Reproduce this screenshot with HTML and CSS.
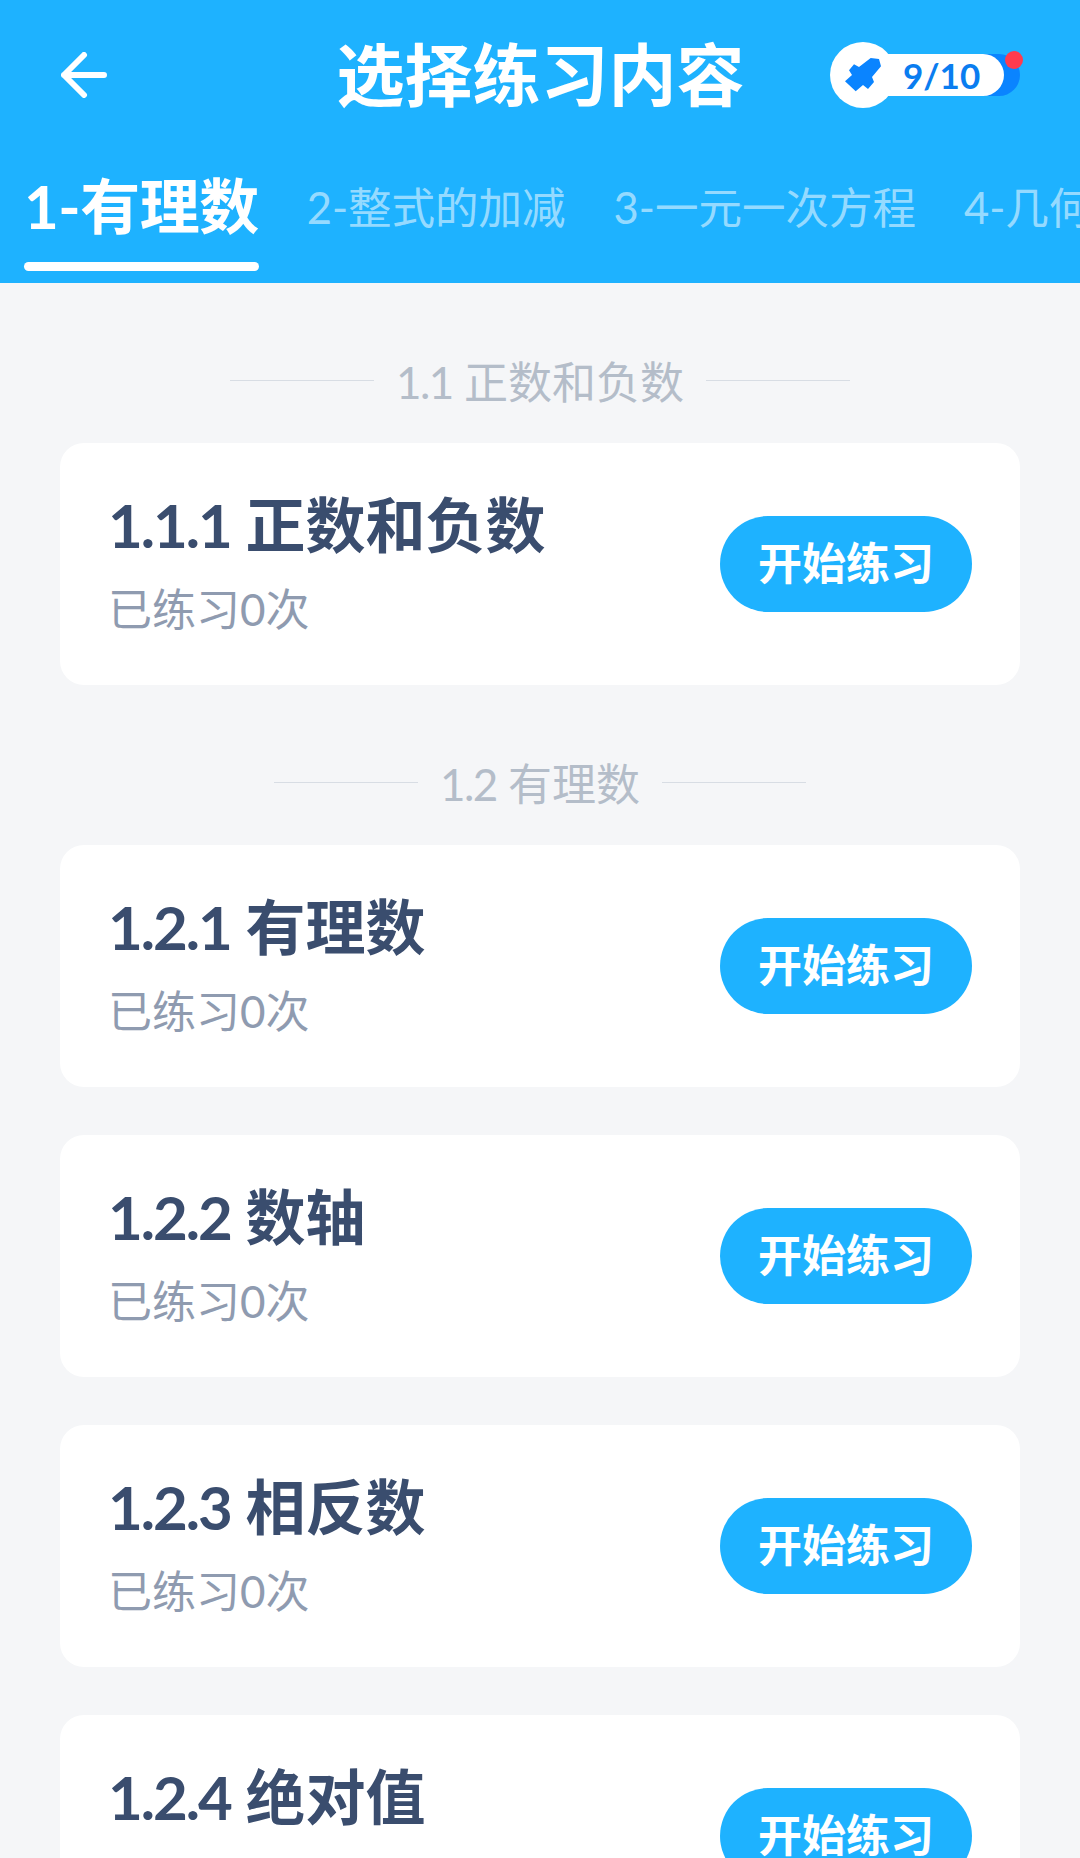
FILE: index.html
```html
<!DOCTYPE html>
<html lang="zh">
<head>
    <meta charset="UTF-8">
    <meta name="viewport" content="width=device-width, initial-scale=1.0">
    <title>选择练习内容</title>
    <link rel="stylesheet" href="styles.css">
</head>
<body>
    <header class="header">
        <div class="topbar">
            <svg class="back-icon" viewBox="0 0 46 46">
                <path d="M23 3 3 23l20 20M3 23h40" fill="none" stroke="#fff" stroke-width="6" stroke-linecap="round" stroke-linejoin="round"/>
            </svg>
            <h1 class="page-title">选择练习内容</h1>
            <div class="energy">
                <div class="energy-back"></div>
                <div class="energy-pill">9/10</div>
                <div class="energy-circle">
                    <svg class="rocket" viewBox="0 0 36 34">
                        <path d="M14 9 25.700 0 34 1 36 8.300 27 19 29 24 23 31 18 27 10.700 33.300 0 23.300 7 17 4 12.300 9 6.300Z" fill="#0a84ff"/>
                    </svg>
                </div>
                <div class="energy-dot"></div>
            </div>
        </div>
        <nav class="tabs">
            <a class="tab active">1-有理数</a>
            <a class="tab">2-整式的加减</a>
            <a class="tab">3-一元一次方程</a>
            <a class="tab">4-几何图形</a>
        </nav>
    </header>

    <main class="content">
        <div class="section-title"><span><span class="section-no">1.1</span> 正数和负数</span></div>
        <div class="card">
            <div class="card-info">
                <div class="card-name"><span class="card-no">1.1.1</span> 正数和负数</div>
                <div class="card-count">已练习0次</div>
            </div>
            <button class="start-btn">开始练习</button>
        </div>

        <div class="section-title"><span><span class="section-no">1.2</span> 有理数</span></div>
        <div class="card">
            <div class="card-info">
                <div class="card-name"><span class="card-no">1.2.1</span> 有理数</div>
                <div class="card-count">已练习0次</div>
            </div>
            <button class="start-btn">开始练习</button>
        </div>
        <div class="card">
            <div class="card-info">
                <div class="card-name"><span class="card-no">1.2.2</span> 数轴</div>
                <div class="card-count">已练习0次</div>
            </div>
            <button class="start-btn">开始练习</button>
        </div>
        <div class="card">
            <div class="card-info">
                <div class="card-name"><span class="card-no">1.2.3</span> 相反数</div>
                <div class="card-count">已练习0次</div>
            </div>
            <button class="start-btn">开始练习</button>
        </div>
        <div class="card">
            <div class="card-info">
                <div class="card-name"><span class="card-no">1.2.4</span> 绝对值</div>
                <div class="card-count">已练习0次</div>
            </div>
            <button class="start-btn">开始练习</button>
        </div>
    </main>
</body>
</html>
```

FILE: styles.css
```css
* {
    box-sizing: border-box;
}
html, body {
    margin: 0;
    height: 1858px;
    overflow: hidden;
}
body {
    font-family: Lato, "Noto Sans CJK SC", sans-serif;
    background-color: #f5f6f8;
}
.header {
    background: #1eb2ff;
    height: 283px;
}
.topbar {
    height: 150px;
    display: grid;
    grid-template-columns: 1fr auto 1fr;
    align-items: center;
    padding: 0 60px 0 61px;
}
.back-icon {
    width: 46px;
    height: 46px;
}
.page-title {
    margin: 0;
    color: white;
    font-size: 68px;
    font-weight: 700;
    line-height: 90px;
}
.energy {
    position: relative;
    justify-self: end;
    width: 190px;
    height: 66px;
}
.energy-back {
    position: absolute;
    top: 12px;
    right: 0;
    width: 100px;
    height: 42px;
    border-radius: 21px;
    background: #0a84ff;
}
.energy-pill {
    position: absolute;
    top: 12px;
    left: 30px;
    width: 144px;
    height: 42px;
    padding-left: 43px;
    border-radius: 21px;
    background: white;
    color: #0a7df0;
    font-size: 35px;
    font-weight: 700;
    line-height: 42px;
}
.energy-circle {
    position: absolute;
    left: 0;
    top: 0;
    width: 66px;
    height: 66px;
    border-radius: 50%;
    background: white;
    display: flex;
    align-items: center;
    justify-content: center;
}
.rocket {
    width: 36px;
    height: 34px;
}
.energy-dot {
    position: absolute;
    top: 9px;
    right: -3px;
    width: 18px;
    height: 18px;
    border-radius: 50%;
    background: #ff3b4e;
}
.tabs {
    display: flex;
    gap: 48px;
    padding-left: 24px;
    height: 133px;
    overflow: hidden;
    white-space: nowrap;
}
.tab {
    flex: none;
    color: rgba(255, 255, 255, 0.55);
    font-size: 43.5px;
    line-height: 115px;
}
.tab.active {
    color: white;
    font-size: 60px;
    font-weight: 700;
    line-height: 112px;
    letter-spacing: -0.5px;
}
.tab.active::after {
    content: "";
    display: block;
    height: 9px;
    border-radius: 5px;
    background: white;
}
.content {
    padding: 48px 60px 0;
}
.section-title {
    height: 112px;
    padding: 25px 0 39px;
    display: flex;
    align-items: center;
    justify-content: center;
    gap: 22px;
    color: #b4bdc9;
    font-size: 44px;
}
.section-title::before, .section-title::after {
    content: "";
    width: 144px;
    height: 1px;
    background: #d8dde4;
}
.section-no {
    letter-spacing: -1.5px;
}
.card {
    background: white;
    height: 242px;
    margin-bottom: 48px;
    padding: 0 48px;
    border-radius: 24px;
    display: flex;
    align-items: center;
    justify-content: space-between;
}
.card-info {
    padding-bottom: 4px;
}
.card-name {
    color: #3a4d6e;
    font-size: 60px;
    font-weight: 700;
    line-height: 80px;
}
.card-no {
    letter-spacing: -2px;
}
.card-count {
    margin-top: 14px;
    color: #8f9bb0;
    font-size: 44px;
    line-height: 60px;
}
.start-btn {
    width: 252px;
    height: 96px;
    padding: 0 0 6px;
    background: #1eb2ff;
    color: white;
    border: none;
    border-radius: 48px;
    font-family: inherit;
    font-size: 44px;
    font-weight: 700;
}
```
